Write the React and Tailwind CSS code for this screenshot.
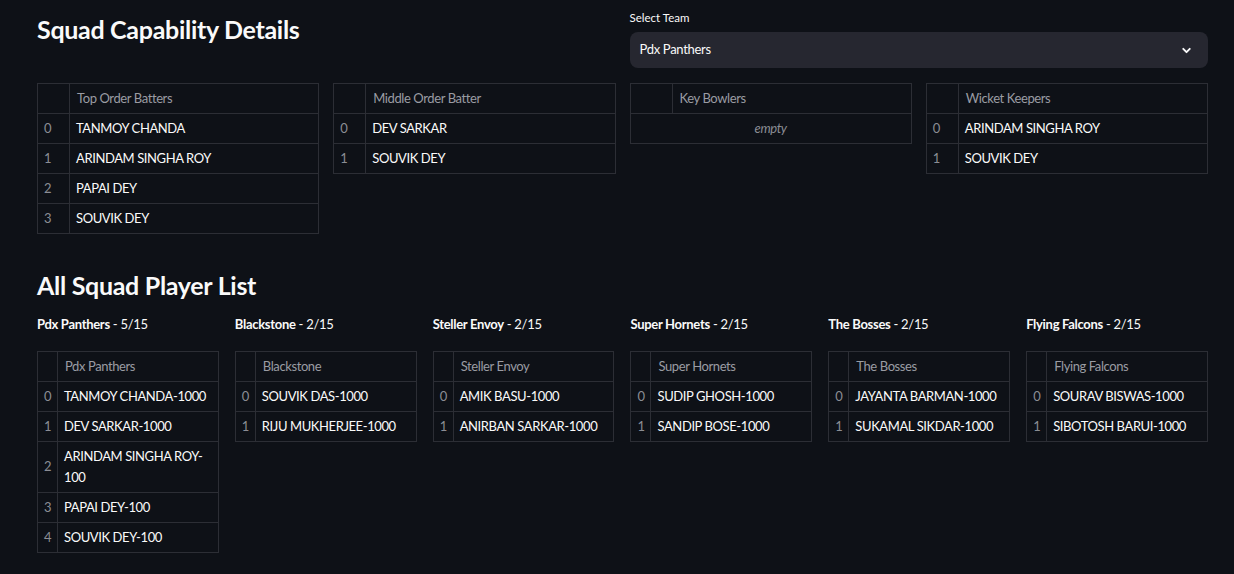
import React from 'react';
import { ChevronDown } from 'lucide-react';

const capability = [
  { title: 'Top Order Batters', rows: ['TANMOY CHANDA', 'ARINDAM SINGHA ROY', 'PAPAI DEY', 'SOUVIK DEY'] },
  { title: 'Middle Order Batter', rows: ['DEV SARKAR', 'SOUVIK DEY'] },
  { title: 'Key Bowlers', rows: [] },
  { title: 'Wicket Keepers', rows: ['ARINDAM SINGHA ROY', 'SOUVIK DEY'] },
];

const squads = [
  { name: 'Pdx Panthers', count: '5/15', rows: ['TANMOY CHANDA-1000', 'DEV SARKAR-1000', 'ARINDAM SINGHA ROY-100', 'PAPAI DEY-100', 'SOUVIK DEY-100'] },
  { name: 'Blackstone', count: '2/15', rows: ['SOUVIK DAS-1000', 'RIJU MUKHERJEE-1000'] },
  { name: 'Steller Envoy', count: '2/15', rows: ['AMIK BASU-1000', 'ANIRBAN SARKAR-1000'] },
  { name: 'Super Hornets', count: '2/15', rows: ['SUDIP GHOSH-1000', 'SANDIP BOSE-1000'] },
  { name: 'The Bosses', count: '2/15', rows: ['JAYANTA BARMAN-1000', 'SUKAMAL SIKDAR-1000'] },
  { name: 'Flying Falcons', count: '2/15', rows: ['SOURAV BISWAS-1000', 'SIBOTOSH BARUI-1000'] },
];

// dataframe-ish table, streamlit dark look
const DataTable = ({ title, rows, indexW }) => (
  <table className="w-full border-collapse table-fixed text-[13px] tracking-[-0.4px]">
    <colgroup>
      <col style={{ width: rows.length ? indexW : 42 }} />
      <col />
    </colgroup>
    <thead>
      <tr className="h-[30px]">
        <th className="border border-[#2c2e35]" />
        <th className="border border-[#2c2e35] px-[7px] text-left font-normal text-[#9a9ca3]">{title}</th>
      </tr>
    </thead>
    <tbody>
      {rows.length === 0 ? (
        <tr className="h-[30px]">
          <td colSpan={2} className="border border-[#2c2e35] text-center italic text-[#8b8d94]">empty</td>
        </tr>
      ) : (
        rows.map((r, i) => (
          <tr key={i} className="h-[30px]">
            <td className="border border-[#2c2e35] px-[6px] text-[#8b8d94]">{i}</td>
            <td className="border border-[#2c2e35] px-[6px] py-[4px] leading-[21px] text-[#fafafa]">{r}</td>
          </tr>
        ))
      )}
    </tbody>
  </table>
);

export default function App() {
  return (
    <div className="h-screen overflow-hidden bg-[#0e1117] pl-[37px] pr-[26px] text-[#fafafa]" style={{ fontFamily: 'Lato, "Noto Sans", sans-serif' }}>
      <div className="grid grid-cols-4 gap-x-[14px]">
        <h2 className="col-span-2 pt-[14px] text-[25px] font-bold leading-[30px] tracking-[-0.3px]">Squad Capability Details</h2>
        <div className="col-span-2 pt-[10px]">
          <div className="text-[11.5px] leading-[16px]">Select Team</div>
          <div className="mt-[6px] flex h-[36px] items-center justify-between rounded-lg bg-[#262730] pl-[10px] pr-[15px] text-[13px] tracking-[-0.3px]">
            <span>Pdx Panthers</span>
            <ChevronDown size={13} strokeWidth={3.5} />
          </div>
        </div>
      </div>

      <div className="mt-[15px] grid grid-cols-4 items-start gap-x-[14px]">
        {capability.map((c) => (
          <DataTable key={c.title} title={c.title} rows={c.rows} indexW={32} />
        ))}
      </div>

      <h2 className="mt-[36px] text-[25px] font-bold leading-[30px] tracking-[-0.3px]">All Squad Player List</h2>

      <div className="mt-[14px] grid grid-cols-6 items-start gap-x-4">
        {squads.map((s) => (
          <div key={s.name}>
            <div className="text-[13px] leading-[20px] tracking-[-0.3px]">
              <span className="font-bold">{s.name}</span> - {s.count}
            </div>
            <div className="mt-[17px]">
              <DataTable title={s.name} rows={s.rows} indexW={20} />
            </div>
          </div>
        ))}
      </div>
    </div>
  );
}
